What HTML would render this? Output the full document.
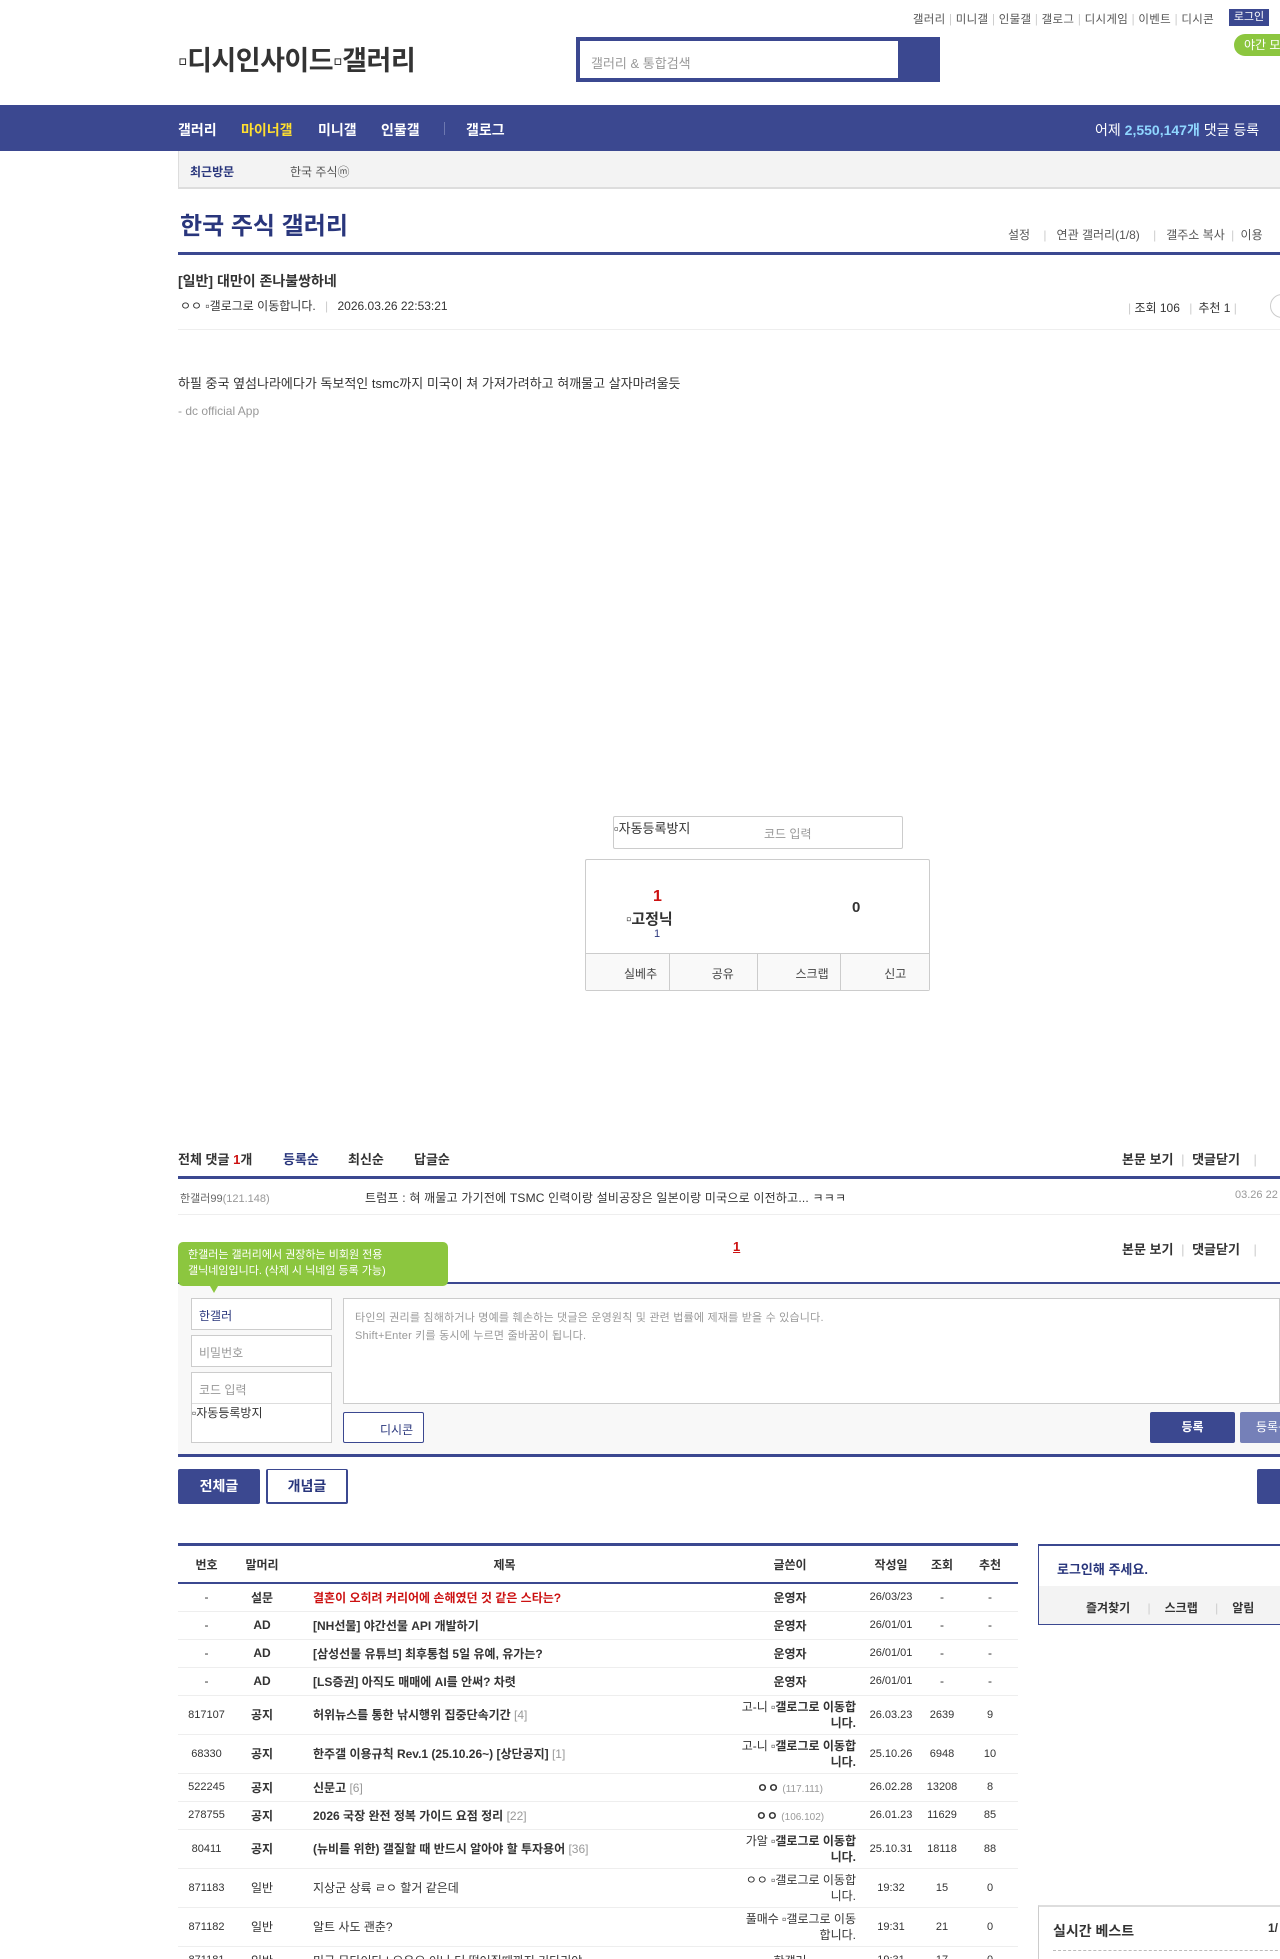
<!DOCTYPE html>
<html><head><meta charset="utf-8">
<style>
*{margin:0;padding:0;box-sizing:border-box}
html,body{width:1280px;height:1959px;overflow:hidden;background:#fff}
body{position:relative;font-family:"Liberation Sans","Noto Sans CJK KR",sans-serif;color:#333;font-size:13px}
.a{position:absolute;white-space:nowrap}
.b{font-weight:bold}
.bl{background:#3b4890}
table{border-collapse:collapse;table-layout:fixed}
</style></head><body>

<div class="a" style="right:66px;top:11px;font-size:11.5px;color:#555;letter-spacing:0.3px">갤러리 <span style="color:#ccc">|</span> 미니갤 <span style="color:#ccc">|</span> 인물갤 <span style="color:#ccc">|</span> 갤로그 <span style="color:#ccc">|</span> 디시게임 <span style="color:#ccc">|</span> 이벤트 <span style="color:#ccc">|</span> 디시콘</div>
<div class="a bl" style="left:1229px;top:9px;width:40px;height:17px;color:#fff;font-size:11px;text-align:center;line-height:17px">로그인</div>
<div class="a" style="left:1234px;top:34px;width:60px;height:22px;background:#8cc63f;border-radius:11px;color:#fff;font-size:12px;line-height:22px;padding-left:10px">야간 모드</div>
<div class="a" style="left:178px;top:39px;font-size:27px;color:#333;font-weight:bold;letter-spacing:-0.5px">▫디시인사이드▫갤러리</div>
<div class="a" style="left:576px;top:37px;width:364px;height:45px;border:4px solid #3b4890;background:#3b4890">
<div style="width:318px;height:37px;background:#fff;border:1px solid #fff;font-size:13px;color:#999;padding:11px 10px">갤러리 &amp; 통합검색</div></div>

<div class="a bl" style="left:0;top:105px;width:1280px;height:46px"></div>
<div class="a b" style="left:178px;top:120px;font-size:14px;color:#fff">갤러리</div>
<div class="a b" style="left:241px;top:120px;font-size:14px;color:#ffdf30">마이너갤</div>
<div class="a b" style="left:318px;top:120px;font-size:14px;color:#fff">미니갤</div>
<div class="a b" style="left:381px;top:120px;font-size:14px;color:#fff">인물갤</div>
<div class="a" style="left:444px;top:122px;width:1px;height:13px;background:#6d78b0"></div>
<div class="a b" style="left:466px;top:120px;font-size:14px;color:#fff">갤로그</div>
<div class="a" style="left:1095px;top:120px;font-size:14px;color:#fff">어제 <b style="color:#8fd6ff">2,550,147개</b> 댓글 등록</div>

<div class="a" style="left:178px;top:151px;width:1102px;height:38px;background:#f3f3f3;border-bottom:2px solid #ddd;border-left:1px solid #ddd"></div>
<div class="a b" style="left:190px;top:163px;font-size:12px;color:#29367c">최근방문</div>
<div class="a" style="left:290px;top:163px;font-size:12px;color:#555">한국 주식ⓜ</div>

<div class="a b" style="left:180px;top:206px;font-size:24px;color:#29367c">한국 주식 갤러리</div>
<div class="a" style="left:1008px;top:226px;font-size:12px;color:#555">설정 <span style="color:#ccc;margin:0 10px">|</span>연관 갤러리(1/8) <span style="color:#ccc;margin:0 10px">|</span>갤주소 복사 <span style="color:#ccc;margin:0 3px">|</span> 이용</div>
<div class="a bl" style="left:178px;top:252px;width:1102px;height:3px"></div>

<div class="a b" style="left:178px;top:271px;font-size:14px;color:#333">[일반] 대만이 존나불쌍하네</div>
<div class="a" style="left:180px;top:297px;font-size:12px;color:#333">ㅇㅇ ▫갤로그로 이동합니다. <span style="color:#ccc;margin:0 6px">|</span> 2026.03.26 22:53:21</div>
<div class="a" style="left:1128px;top:299px;font-size:12px;color:#333"><span style="color:#ccc">|</span> 조회 106 <span style="color:#ccc;margin:0 6px">|</span>추천 1 <span style="color:#ccc">|</span></div>
<div class="a" style="left:1270px;top:294px;width:24px;height:24px;border:1px solid #ccc;border-radius:12px"></div>
<div class="a" style="left:178px;top:329px;width:1102px;height:1px;background:#eee"></div>

<div class="a" style="left:178px;top:373px;font-size:13px;color:#333">하필 중국 옆섬나라에다가 독보적인 tsmc까지 미국이 쳐 가져가려하고 혀깨물고 살자마려울듯</div>
<div class="a" style="left:178px;top:404px;font-size:12px;color:#999">- dc official App</div>

<div class="a" style="left:613px;top:816px;width:290px;height:33px;border:1px solid #ccc;border-radius:2px"></div>
<div class="a" style="left:614px;top:818px;font-size:13px;color:#333">▫자동등록방지</div>
<div class="a" style="left:764px;top:825px;font-size:12px;color:#999">코드 입력</div>

<div class="a" style="left:585px;top:859px;width:345px;height:132px;border:1px solid #ccc;border-radius:2px"></div>
<div class="a b" style="left:653px;top:888px;font-size:16px;color:#c11">1</div>
<div class="a b" style="left:626px;top:908px;font-size:15px;color:#333">▫고정닉</div>
<div class="a" style="left:654px;top:928px;font-size:11px;color:#29367c">1</div>
<div class="a b" style="left:852px;top:899px;font-size:15px;color:#333">0</div>
<div class="a" style="left:586px;top:953px;width:343px;height:37px;background:#f9f9f9;border-top:1px solid #ccc;display:flex;font-size:12px;color:#444">
<div style="flex:1;border-right:1px solid #ccc;padding:11px 0 0 38px">실베추</div><div style="flex:1;border-right:1px solid #ccc;padding:11px 0 0 42px">공유</div><div style="flex:1;border-right:1px solid #ccc;padding:11px 0 0 38px">스크랩</div><div style="flex:1;padding:11px 0 0 43px">신고</div></div>

<div class="a b" style="left:178px;top:1149px;font-size:13px;color:#333">전체 댓글 <span style="color:#c11">1</span>개</div>
<div class="a b" style="left:283px;top:1149px;font-size:13px;color:#29367c">등록순</div>
<div class="a b" style="left:348px;top:1149px;font-size:13px;color:#333">최신순</div>
<div class="a b" style="left:414px;top:1149px;font-size:13px;color:#333">답글순</div>
<div class="a b" style="left:1122px;top:1149px;font-size:13px;color:#333">본문 보기 <span style="color:#ccc;font-weight:normal;margin:0 4px">|</span> 댓글닫기 <span style="color:#ccc;font-weight:normal;margin-left:10px">|</span></div>
<div class="a bl" style="left:178px;top:1176px;width:1102px;height:3px"></div>
<div class="a" style="left:180px;top:1190px;font-size:11px;color:#666">한갤러99<span style="color:#999">(121.148)</span></div>
<div class="a" style="left:365px;top:1189px;font-size:12px;color:#333;letter-spacing:0.2px">트럼프 : 혀 깨물고 가기전에 TSMC 인력이랑 설비공장은 일본이랑 미국으로 이전하고... ㅋㅋㅋ</div>
<div class="a" style="left:1235px;top:1189px;font-size:11px;color:#999">03.26 22</div>
<div class="a" style="left:178px;top:1214px;width:1102px;height:1px;background:#eee"></div>

<div class="a b" style="left:733px;top:1239px;font-size:13px;color:#c11;text-decoration:underline">1</div>
<div class="a b" style="left:1122px;top:1239px;font-size:13px;color:#333">본문 보기 <span style="color:#ccc;font-weight:normal;margin:0 4px">|</span> 댓글닫기 <span style="color:#ccc;font-weight:normal;margin-left:10px">|</span></div>
<div class="a bl" style="left:178px;top:1282px;width:1102px;height:2px"></div>
<div class="a" style="left:178px;top:1284px;width:1102px;height:171px;background:#f8f8f8"></div>
<div class="a" style="left:178px;top:1242px;width:270px;height:44px;background:#8cc63f;border-radius:5px;color:#fff;font-size:11px;line-height:16px;padding:5px 10px">한갤러는 갤러리에서 권장하는 비회원 전용<br>갤닉네임입니다. (삭제 시 닉네임 등록 가능)</div>
<div class="a" style="left:210px;top:1286px;width:0;height:0;border-left:4px solid transparent;border-right:4px solid transparent;border-top:7px solid #8cc63f"></div>
<div class="a" style="left:191px;top:1298px;width:141px;height:32px;border:1px solid #ccc;background:#fff;font-size:12px;color:#29367c;padding:8px 7px">한갤러</div>
<div class="a" style="left:191px;top:1335px;width:141px;height:32px;border:1px solid #ccc;background:#fff;font-size:12px;color:#999;padding:8px 7px">비밀번호</div>
<div class="a" style="left:191px;top:1372px;width:141px;height:71px;border:1px solid #ccc;background:#fff;font-size:12px;color:#999;padding:8px 7px">코드 입력</div>
<div class="a" style="left:192px;top:1403px;width:139px;height:1px;background:#ddd"></div>
<div class="a" style="left:192px;top:1404px;font-size:12px;color:#333">▫자동등록방지</div>
<div class="a" style="left:343px;top:1298px;width:937px;height:106px;border:1px solid #ccc;background:#fff;font-size:11px;color:#999;line-height:18px;padding:10px 11px;letter-spacing:0.2px">타인의 권리를 침해하거나 명예를 훼손하는 댓글은 운영원칙 및 관련 법률에 제재를 받을 수 있습니다.<br>Shift+Enter 키를 동시에 누르면 줄바꿈이 됩니다.</div>
<div class="a" style="left:343px;top:1412px;width:81px;height:31px;border:1px solid #3b4890;border-radius:2px;background:#fff;font-size:12px;color:#29367c;padding:8px 0 0 36px">디시콘</div>
<div class="a bl" style="left:1150px;top:1412px;width:85px;height:31px;border-radius:2px;color:#fff;font-size:12px;text-align:center;line-height:31px;font-weight:bold">등록</div>
<div class="a" style="left:1240px;top:1412px;width:60px;height:31px;border-radius:2px;background:#7580b8;color:#fff;font-size:12px;line-height:31px;padding-left:16px">등록+</div>
<div class="a bl" style="left:178px;top:1454px;width:1102px;height:3px"></div>

<div class="a bl" style="left:178px;top:1469px;width:82px;height:35px;border-radius:2px;color:#fff;font-size:14px;font-weight:bold;text-align:center;line-height:35px">전체글</div>
<div class="a" style="left:266px;top:1469px;width:82px;height:35px;border:2px solid #3b4890;border-top-width:1px;border-radius:2px;color:#29367c;font-size:14px;font-weight:bold;text-align:center;line-height:32px">개념글</div>
<div class="a bl" style="left:1257px;top:1469px;width:40px;height:35px;border-radius:2px"></div>

<div class="a bl" style="left:178px;top:1543px;width:840px;height:3px"></div>
<table class="a" style="left:178px;top:1546px;width:840px;font-size:12px;color:#333">
<colgroup><col style="width:57px"><col style="width:54px"><col style="width:431px"><col style="width:140px"><col style="width:62px"><col style="width:40px"><col style="width:56px"></colgroup>
<tr style="height:37px;border-bottom:2px solid #3b4890;font-weight:bold;text-align:center"><td>번호</td><td>말머리</td><td>제목</td><td>글쓴이</td><td>작성일</td><td>조회</td><td>추천</td></tr>
<tbody style="text-align:center">
<tr style="height:28px;border-bottom:1px solid #eee"><td>-</td><td class="b">설문</td><td class="b" style="text-align:left;padding-left:24px;color:#c11">결혼이 오히려 커리어에 손해였던 것 같은 스타는?</td><td class="b">운영자</td><td style="font-size:11px">26/03/23</td><td>-</td><td>-</td></tr>
<tr style="height:28px;border-bottom:1px solid #eee"><td>-</td><td class="b">AD</td><td class="b" style="text-align:left;padding-left:24px">[NH선물] 야간선물 API 개발하기</td><td class="b">운영자</td><td style="font-size:11px">26/01/01</td><td>-</td><td>-</td></tr>
<tr style="height:28px;border-bottom:1px solid #eee"><td>-</td><td class="b">AD</td><td class="b" style="text-align:left;padding-left:24px">[삼성선물 유튜브] 최후통첩 5일 유예, 유가는?</td><td class="b">운영자</td><td style="font-size:11px">26/01/01</td><td>-</td><td>-</td></tr>
<tr style="height:28px;border-bottom:1px solid #eee"><td>-</td><td class="b">AD</td><td class="b" style="text-align:left;padding-left:24px">[LS증권] 아직도 매매에 AI를 안써? 차렷</td><td class="b">운영자</td><td style="font-size:11px">26/01/01</td><td>-</td><td>-</td></tr>
<tr style="height:39px;border-bottom:1px solid #eee"><td style="font-size:11px">817107</td><td class="b">공지</td><td class="b" style="text-align:left;padding-left:24px">허위뉴스를 통한 낚시행위 집중단속기간 <span style="color:#999;font-weight:normal">[4]</span></td><td style="line-height:16px;text-align:right;padding-right:4px">고-니 <b>▫갤로그로 이동합<br>니다.</b></td><td style="font-size:11px">26.03.23</td><td style="font-size:11px">2639</td><td style="font-size:11px">9</td></tr>
<tr style="height:39px;border-bottom:1px solid #eee"><td style="font-size:11px">68330</td><td class="b">공지</td><td class="b" style="text-align:left;padding-left:24px">한주갤 이용규칙 Rev.1 (25.10.26~) [상단공지] <span style="color:#999;font-weight:normal">[1]</span></td><td style="line-height:16px;text-align:right;padding-right:4px">고-니 <b>▫갤로그로 이동합<br>니다.</b></td><td style="font-size:11px">25.10.26</td><td style="font-size:11px">6948</td><td style="font-size:11px">10</td></tr>
<tr style="height:28px;border-bottom:1px solid #eee"><td style="font-size:11px">522245</td><td class="b">공지</td><td class="b" style="text-align:left;padding-left:24px">신문고 <span style="color:#999;font-weight:normal">[6]</span></td><td class="b">ㅇㅇ <span style="font-size:10px;color:#999;font-weight:normal">(117.111)</span></td><td style="font-size:11px">26.02.28</td><td style="font-size:11px">13208</td><td style="font-size:11px">8</td></tr>
<tr style="height:28px;border-bottom:1px solid #eee"><td style="font-size:11px">278755</td><td class="b">공지</td><td class="b" style="text-align:left;padding-left:24px">2026 국장 완전 정복 가이드 요점 정리 <span style="color:#999;font-weight:normal">[22]</span></td><td class="b">ㅇㅇ <span style="font-size:10px;color:#999;font-weight:normal">(106.102)</span></td><td style="font-size:11px">26.01.23</td><td style="font-size:11px">11629</td><td style="font-size:11px">85</td></tr>
<tr style="height:39px;border-bottom:1px solid #eee"><td style="font-size:11px">80411</td><td class="b">공지</td><td class="b" style="text-align:left;padding-left:24px">(뉴비를 위한) 갤질할 때 반드시 알아야 할 투자용어 <span style="color:#999;font-weight:normal">[36]</span></td><td style="line-height:16px;text-align:right;padding-right:4px">가알 <b>▫갤로그로 이동합<br>니다.</b></td><td style="font-size:11px">25.10.31</td><td style="font-size:11px">18118</td><td style="font-size:11px">88</td></tr>
<tr style="height:39px;border-bottom:1px solid #eee"><td style="font-size:11px">871183</td><td>일반</td><td style="text-align:left;padding-left:24px">지상군 상륙 ㄹㅇ 할거 같은데</td><td style="line-height:16px;text-align:right;padding-right:4px">ㅇㅇ ▫갤로그로 이동합<br>니다.</td><td style="font-size:11px">19:32</td><td style="font-size:11px">15</td><td style="font-size:11px">0</td></tr>
<tr style="height:39px;border-bottom:1px solid #eee"><td style="font-size:11px">871182</td><td>일반</td><td style="text-align:left;padding-left:24px">알트 사도 괜춘?</td><td style="line-height:16px;text-align:right;padding-right:4px">풀매수 ▫갤로그로 이동<br>합니다.</td><td style="font-size:11px">19:31</td><td style="font-size:11px">21</td><td style="font-size:11px">0</td></tr>
<tr style="height:28px"><td style="font-size:11px">871181</td><td>일반</td><td style="text-align:left;padding-left:24px">미국 무타이타 | 오우오 이나 더 떨어질때까지 기다리야</td><td>한갤러</td><td style="font-size:11px">19:31</td><td style="font-size:11px">17</td><td style="font-size:11px">0</td></tr>
</tbody></table>

<div class="a" style="left:1038px;top:1544px;width:260px;height:81px;border:1px solid #3b4890;border-top-width:2px"></div>
<div class="a b" style="left:1057px;top:1559px;font-size:13px;color:#29367c">로그인해 주세요.</div>
<div class="a" style="left:1039px;top:1586px;width:250px;height:38px;background:#f3f3f3"></div>
<div class="a b" style="left:1086px;top:1599px;font-size:12px;color:#333">즐겨찾기 <span style="color:#ccc;font-weight:normal;margin:0 14px">|</span>스크랩 <span style="color:#ccc;font-weight:normal;margin:0 14px">|</span>알림</div>
<div class="a" style="left:1038px;top:1905px;width:260px;height:60px;border:1px solid #ccc;border-top:2px solid #ddd"></div>
<div class="a b" style="left:1053px;top:1921px;font-size:14px;color:#333">실시간 베스트</div>
<div class="a b" style="left:1268px;top:1921px;font-size:12px;color:#333">1/</div>
<div class="a" style="left:1053px;top:1950px;width:240px;height:0;border-top:1px dashed #bbb"></div>
</body></html>
